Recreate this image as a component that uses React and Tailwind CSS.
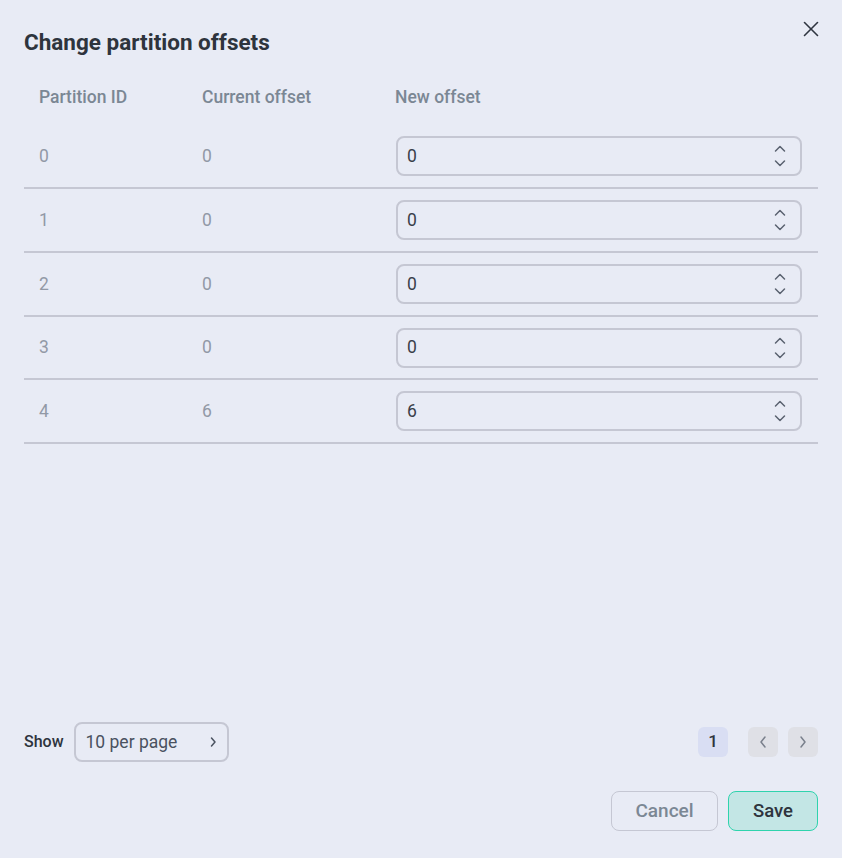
import React from "react";

const rows = [
  { id: 0, cur: 0, next: 0 },
  { id: 1, cur: 0, next: 0 },
  { id: 2, cur: 0, next: 0 },
  { id: 3, cur: 0, next: 0 },
  { id: 4, cur: 6, next: 6 },
];

function Spinner() {
  return (
    <svg width="12" height="26" viewBox="0 0 12 26" fill="none" stroke="#5a6270" strokeWidth="1.5" strokeLinecap="round" strokeLinejoin="round">
      <path d="M1.5 8 L6 3.5 L10.5 8" />
      <path d="M1.5 18 L6 22.5 L10.5 18" />
    </svg>
  );
}

export default function App() {
  return (
    <div
      className="h-[858px] w-full bg-[#e8ebf5] flex flex-col px-6 pt-7 pb-[27px] relative"
      style={{ fontFamily: "Roboto, 'Liberation Sans', sans-serif" }}
    >
      <button className="absolute right-[23px] top-[21px] w-4 h-4 flex items-center justify-center">
        <svg width="16" height="16" viewBox="0 0 16 16" fill="none" stroke="#2f3540" strokeWidth="1.6" strokeLinecap="round">
          <path d="M1.5 1.5 L14.5 14.5" />
          <path d="M14.5 1.5 L1.5 14.5" />
        </svg>
      </button>
      <h1 className="text-[22.5px] leading-7 font-bold text-[#2e343d]">Change partition offsets</h1>
      <div className="flex-1 mt-[14px]">
        <div className="grid grid-cols-[163px_193px_1fr] h-[55px] items-center text-[17.5px] font-medium text-[#7b8794]">
          <div className="pl-[15px]">Partition ID</div>
          <div className="pl-[15px]">Current offset</div>
          <div className="pl-[15px]">New offset</div>
        </div>
        {rows.map((r, i) => (
          <div
            key={r.id}
            className={`grid grid-cols-[163px_193px_1fr] ${i === 3 ? "h-[63px]" : "h-[64px]"} items-center border-b-2 border-[#c5c7d3] text-[17.5px] text-[#9299a6]`}
          >
            <div className="pl-[15px]">{r.id}</div>
            <div className="pl-[15px]">{r.cur}</div>
            <div className="pl-[16px] pr-[16px]">
              <div className="h-10 rounded-lg border-2 border-[#c5c7d3] flex items-center justify-between pl-[9px] pr-[14px] text-[#3a3f4a]">
                <span>{r.next}</span>
                <Spinner />
              </div>
            </div>
          </div>
        ))}
      </div>
      <div className="flex items-center justify-between h-10">
        <div className="flex items-center gap-[10px]">
          <span className="text-[16px] font-medium text-[#2e343d]">Show</span>
          <div className="w-[155px] h-10 rounded-lg border-2 border-[#c5c7d3] flex items-center justify-between pl-[10px] pr-[10px] text-[17.5px] text-[#4a5260]">
            <span>10 per page</span>
            <svg width="8" height="12" viewBox="0 0 8 12" fill="none" stroke="#4a5260" strokeWidth="1.5" strokeLinecap="round" strokeLinejoin="round">
              <path d="M2.5 2 L6 6 L2.5 10" />
            </svg>
          </div>
        </div>
        <div className="flex items-center">
          <div className="w-[30px] h-[30px] rounded-md bg-[#d9def3] flex items-center justify-center text-[17px] font-medium text-[#2e343d]">1</div>
          <div className="w-[30px] h-[30px] rounded-md bg-[#dfe0e6] flex items-center justify-center ml-5">
            <svg width="10" height="14" viewBox="0 0 10 14" fill="none" stroke="#7a808c" strokeWidth="1.5" strokeLinecap="round" strokeLinejoin="round">
              <path d="M7 2 L3 7 L7 12" />
            </svg>
          </div>
          <div className="w-[30px] h-[30px] rounded-md bg-[#dfe0e6] flex items-center justify-center ml-[10px]">
            <svg width="10" height="14" viewBox="0 0 10 14" fill="none" stroke="#7a808c" strokeWidth="1.5" strokeLinecap="round" strokeLinejoin="round">
              <path d="M3 2 L7 7 L3 12" />
            </svg>
          </div>
        </div>
      </div>
      <div className="flex justify-end gap-[10px] mt-[29px]">
        <button className="w-[107px] h-10 rounded-lg border-[1.5px] border-[#c5c7d3] text-[19px] font-medium text-[#7b8794]">Cancel</button>
        <button className="w-[90px] h-10 rounded-lg border-[1.5px] border-[#2fd3ad] bg-[#c3e6e5] text-[18.5px] font-medium text-[#2e343d] pt-[2px]">Save</button>
      </div>
    </div>
  );
}
